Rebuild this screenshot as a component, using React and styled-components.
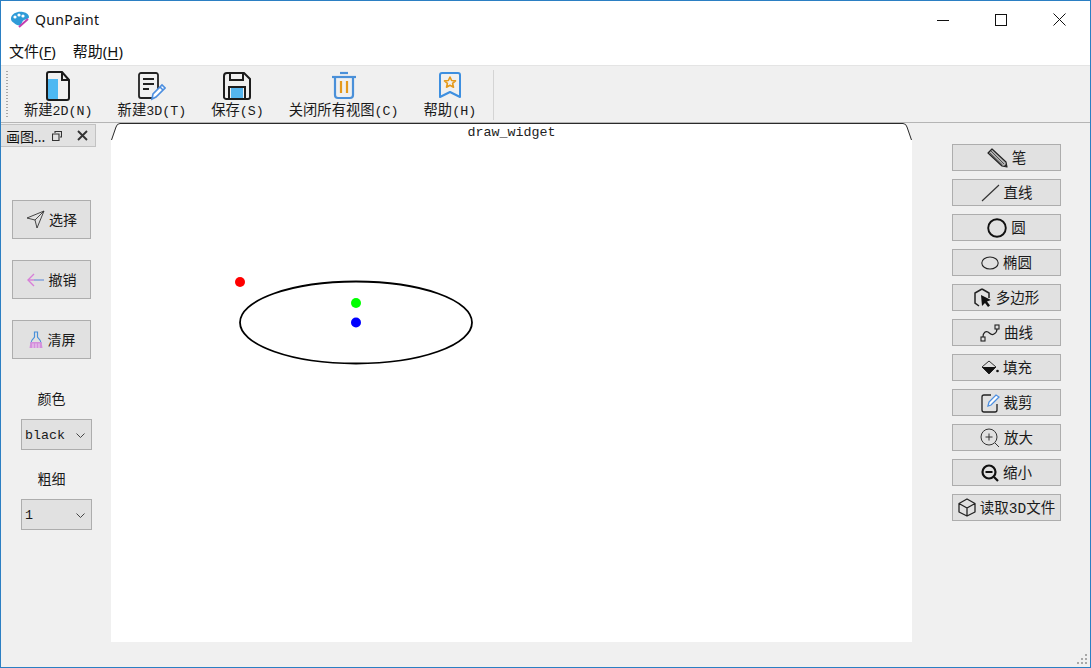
import React from "react";
import styled, { createGlobalStyle } from "styled-components";

const Global = createGlobalStyle`
  html, body { margin: 0; padding: 0; background: #f0f0f0; }
  * { box-sizing: border-box; }
`;
const CJK = `"Liberation Mono", "Noto Sans CJK SC", monospace`;
const UI = `"Noto Sans", "Noto Sans CJK SC", sans-serif`;

const Window = styled.div`
  width: 1091px; height: 668px; border: 1px solid #2b7fc3; background: #f0f0f0;
  display: flex; flex-direction: column; position: relative; overflow: hidden;
  font-family: ${CJK}; color: #1a1a1a;
`;
const TitleBar = styled.div`
  height: 37px; background: #fff; display: flex; align-items: center; padding-left: 9px; flex: none;
`;
const AppName = styled.span`
  font: 14px ${UI}; margin-left: 5px; color: #111; letter-spacing: 0.3px;
`;
const WinControls = styled.div`
  margin-left: auto; display: flex; align-items: center; padding-right: 1px; height: 100%;
`;
const WinBtn = styled.div`
  width: 58.5px; display: flex; justify-content: center; align-items: center;
`;
const MenuBar = styled.div`
  height: 27px; background: #fff; display: flex; gap: 17px; align-items: center; padding: 0 0 3px 8px; flex: none;
  font: 15px ${UI}; color: #111;
`;
const MenuItem = styled.span`
  u { text-underline-offset: 2px; }
`;
const Toolbar = styled.div`
  height: 58px; flex: none; background: #f0f0f0; border-top: 1px solid #e4e4e4; border-bottom: 1px solid #b5b5b5;
  display: flex; align-items: flex-start; padding: 4px 0 0 5px;
`;
const Grip = styled.div`
  width: 2px; height: 48px; margin: 1px 16px 0 0;
  background-image: linear-gradient(#a8a8a8 50%, transparent 50%);
  background-size: 2px 3px;
`;
const ToolButtons = styled.div`
  display: flex; gap: 25px;
`;
const ToolButton = styled.div`
  display: flex; flex-direction: column; align-items: center; font-size: 14.3px; line-height: 16px; white-space: nowrap;
  svg { display: block; height: 32px; margin-bottom: 1px; }
`;
const Latin = styled.span`
  font-size: 13.33px;
`;
const ToolSep = styled.div`
  width: 1px; height: 50px; background: #d4d4d4; margin-left: 17px;
`;
const Main = styled.div`
  flex: 1; display: flex; min-height: 0;
`;
const LeftDock = styled.div`
  width: 110px; flex: none; display: flex; flex-direction: column;
`;
const DockTab = styled.div`
  width: 95px; height: 23px; margin-top: 1px; background: #e2e2e2; border: 1px solid #c2c2c2; border-left: 0;
  display: flex; align-items: center; padding-left: 5px; font: 14px ${UI}; color: #111; white-space: nowrap;
`;
const DockIcons = styled.div`
  margin-left: auto; display: flex; align-items: center; gap: 15px; padding-right: 7px;
`;
const LeftContent = styled.div`
  display: flex; flex-direction: column; padding: 53px 0 0 11px;
`;
const LeftButtons = styled.div`
  display: flex; flex-direction: column; gap: 21px; margin-bottom: 30px;
`;
const LeftButton = styled.div`
  width: 79px; height: 39px; background: #e1e1e1; border: 1px solid #adadad;
  display: flex; align-items: center; justify-content: center; gap: 4px; font-size: 14px;
`;
const ButtonText = styled.span`
  margin-top: -2px;
`;
const FieldLabel = styled.div`
  width: 79px; text-align: center; font-size: 14px; line-height: 20px; padding-top: 1px; height: 20px; margin-bottom: 10px;
`;
const Combo = styled.div`
  width: 71px; height: 31px; margin: 0 0 19px 9px; background: #e1e1e1; border: 1px solid #adadad;
  display: flex; align-items: center; justify-content: space-between; padding: 1px 6px 0 3px; font-size: 13.33px;
`;
const CanvasArea = styled.div`
  width: 801px; flex: none; height: 519px; background: #fff; position: relative;
  display: flex; flex-direction: column; align-items: center;
`;
const TabShape = styled.svg`
  position: absolute; left: 0; top: 0; width: 801px; height: 20px; pointer-events: none;
`;
const TabTitle = styled.div`
  position: relative; font-size: 13.33px; line-height: 16px; margin-top: 2px; color: #222;
`;
const Drawing = styled.svg`
  position: absolute; left: 0; top: 0;
`;
const RightPanel = styled.div`
  flex: 1; display: flex; flex-direction: column; gap: 8px; padding: 21px 0 0 40px;
`;
const ShapeButton = styled.div`
  width: 109px; height: 27px; background: #e1e1e1; border: 1px solid #adadad;
  display: flex; align-items: center; justify-content: center; gap: 4px; font-size: 14.5px; white-space: nowrap;
`;
const SizeGrip = styled.svg`
  position: absolute; right: 2px; bottom: 2px;
`;

const Palette = () => (
  <svg width="20" height="18" viewBox="0 0 20 18">
    <path d="M1 7C2 2 8 0 13 1c4 .8 6 3 6 5 0 2-3 2-5 3-2 1-2 3-3 5-2 1-5 0-7-2C2 11 .6 9 1 7Z" fill="#2f9bd8" />
    <circle cx="5" cy="6" r="1.6" fill="#fff" /><circle cx="9" cy="4" r="1.6" fill="#fff" /><circle cx="13" cy="5" r="1.6" fill="#fff" />
    <path d="M9 16 18 8" stroke="#c43fb0" strokeWidth="2" />
  </svg>
);
const NewDoc = () => (
  <svg width="26" height="32" viewBox="0 0 26 32">
    <path d="M2 9h11v21H4a2 2 0 0 1-2-2Z" fill="#4db8f2" />
    <path d="M4 2h13l7 8v18a2 2 0 0 1-2 2H4a2 2 0 0 1-2-2V4a2 2 0 0 1 2-2Z" fill="none" stroke="#1b1b1b" strokeWidth="2" />
    <path d="M17 2v8h7" fill="none" stroke="#1b1b1b" strokeWidth="2" />
  </svg>
);
const NewNote = () => (
  <svg width="28" height="32" viewBox="0 0 28 32">
    <path d="M20 19V5a2 2 0 0 0-2-2H3a2 2 0 0 0-2 2v21a2 2 0 0 0 2 2h11" fill="none" stroke="#222" strokeWidth="1.8" />
    <path d="M5 9h11M5 14h11M5 19h6" stroke="#222" strokeWidth="1.8" />
    <path d="M14 29l1-5 9-9 3 3-9 9Z" fill="#fff" stroke="#4d8fe0" strokeWidth="1.6" />
    <path d="M22 17l3 3" stroke="#4d8fe0" strokeWidth="1.6" />
  </svg>
);
const Save = () => (
  <svg width="28" height="32" viewBox="0 0 28 32">
    <rect x="8" y="18" width="12" height="11" fill="#55b6ef" />
    <path d="M4 3h17l6 6v18a2 2 0 0 1-2 2H4a2.500 2.500 0 0 1-3-3V6a3 3 0 0 1 3-3Z" fill="none" stroke="#1d1d1d" strokeWidth="2" />
    <path d="M7 3v7h13V3" fill="none" stroke="#1d1d1d" strokeWidth="2" />
    <path d="M6 29V17h16v12" fill="none" stroke="#1d1d1d" strokeWidth="2" />
  </svg>
);
const Trash = () => (
  <svg width="24" height="32" viewBox="0 0 24 32">
    <path d="M8 3h8" stroke="#4a90d9" strokeWidth="2.200" />
    <path d="M0 7h24" stroke="#4a90d9" strokeWidth="2.200" />
    <path d="M3 7v18a3 3 0 0 0 3 3h12a3 3 0 0 0 3-3V7" fill="none" stroke="#4a90d9" strokeWidth="2.200" />
    <path d="M9 11v12M15 11v12" stroke="#e59a1c" strokeWidth="2.200" />
  </svg>
);
const Help = () => (
  <svg width="24" height="32" viewBox="0 0 24 32">
    <path d="M4 3h16a2 2 0 0 1 2 2v22l-10-5-10 5V5a2 2 0 0 1 2-2Z" fill="none" stroke="#3d8fe0" strokeWidth="2" strokeLinejoin="round" />
    <path d="M12 7l1.600 3.500 3.900.4-2.900 2.500.9 3.800-3.500-2-3.500 2 .9-3.800-2.900-2.500 3.900-.4Z" fill="none" stroke="#e59a1c" strokeWidth="1.600" strokeLinejoin="round" />
  </svg>
);

const Send = () => (
  <svg width="19" height="19" viewBox="0 0 19 19">
    <path d="M18 1 1 8l8 2 2 8Z M18 1 9 10" fill="none" stroke="#333" strokeWidth=".9" strokeLinejoin="round" />
  </svg>
);
const BackArrow = () => (
  <svg width="18" height="14" viewBox="0 0 18 14">
    <path d="M7 1 1 7l6 6" fill="none" stroke="#d77fd8" strokeWidth="1.400" />
    <path d="M1 7h6" stroke="#d77fd8" strokeWidth="1.400" />
    <path d="M7 7h10" stroke="#7f9ed8" strokeWidth="1.400" />
  </svg>
);
const Broom = () => (
  <svg width="16" height="18" viewBox="0 0 16 18">
    <path d="M6.500 1h3v5c0 1 3 2 3.500 6H3C3.500 8 6.500 7 6.500 6Z" fill="none" stroke="#4a90d9" strokeWidth="1.200" />
    <path d="M2.500 11h11l1 6H1.500Z" fill="#d48fdc" />
    <path d="M5 12.500V17M8 12.500V17M11 12.500V17" stroke="#f2e4f4" strokeWidth=".8" />
  </svg>
);

const Pencil = () => (
  <svg width="21" height="20" viewBox="0 0 21 20">
    <path d="M1 5l4-4 14 13 1 5-5-1Z" fill="#b5b5b5" stroke="#222" strokeWidth="1.200" strokeLinejoin="round" />
    <path d="M4 3l13 13M2.500 4.500l13 12.500" stroke="#333" strokeWidth=".8" />
    <path d="M17 18l3 1-1-3Z" fill="#222" />
  </svg>
);
const LineIc = () => (
  <svg width="19" height="18" viewBox="0 0 19 18"><path d="M1 17 18 1" stroke="#333" strokeWidth="1.100" /></svg>
);
const CircleIc = () => (
  <svg width="20" height="20" viewBox="0 0 20 20"><circle cx="10" cy="10" r="8.800" fill="none" stroke="#111" strokeWidth="1.900" /></svg>
);
const EllipseIc = () => (
  <svg width="18" height="14" viewBox="0 0 18 14"><ellipse cx="9" cy="7" rx="8.200" ry="6" fill="none" stroke="#222" strokeWidth="1.100" /></svg>
);
const PolyIc = () => (
  <svg width="18" height="20" viewBox="0 0 18 20">
    <path d="M8 1 15 5v5M5 18l-4-3V5l7-4" fill="none" stroke="#222" strokeWidth="1.500" />
    <path d="M7 7l10 5-4 1.500 3 4-2 1.500-3-4-3 3Z" fill="#111" />
  </svg>
);
const CurveIc = () => (
  <svg width="20" height="20" viewBox="0 0 20 20">
    <rect x="1" y="14" width="4" height="4" fill="none" stroke="#222" strokeWidth="1.100" />
    <rect x="15" y="2" width="4" height="4" fill="none" stroke="#222" strokeWidth="1.100" />
    <path d="M3 14c0-5 3-6 5-5s3 4 6 2c2-1 3-3 3-5" fill="none" stroke="#222" strokeWidth="1.200" />
  </svg>
);
const FillIc = () => (
  <svg width="18" height="15" viewBox="0 0 18 15">
    <path d="M8 1 1 7l7 7 7-7Z" fill="none" stroke="#333" strokeWidth="1" />
    <path d="M1 7h14l-7 7Z" fill="#111" />
    <circle cx="16.500" cy="11" r="1.300" fill="#111" />
  </svg>
);
const CropIc = () => (
  <svg width="19" height="20" viewBox="0 0 19 20">
    <path d="M10 2H3a2 2 0 0 0-2 2v13a2 2 0 0 0 2 2h11a2 2 0 0 0 2-2v-6" fill="none" stroke="#222" strokeWidth="1.300" />
    <path d="M7 13l1-4 7-7 3 2-8 8Z" fill="#fff" stroke="#4d8fe0" strokeWidth="1.300" />
  </svg>
);
const ZoomIn = () => (
  <svg width="20" height="20" viewBox="0 0 20 20">
    <circle cx="9" cy="9" r="8" fill="none" stroke="#333" strokeWidth="1" />
    <path d="M5.500 9h7M9 5.500v7M15 15l4 4" stroke="#333" strokeWidth="1" />
  </svg>
);
const ZoomOut = () => (
  <svg width="18" height="18" viewBox="0 0 18 18">
    <circle cx="8" cy="8" r="6.500" fill="none" stroke="#111" strokeWidth="2.200" />
    <path d="M4.500 8h7M13 13l4 4" stroke="#111" strokeWidth="2.200" />
  </svg>
);
const Cube = () => (
  <svg width="18" height="19" viewBox="0 0 18 19">
    <path d="M9 1l8 4.500v8.500L9 18l-8-4V5.500Z M1 5.500 9 10l8-4.500M9 10v8" fill="none" stroke="#222" strokeWidth="1.300" strokeLinejoin="round" />
  </svg>
);
const Chevron = () => (
  <svg width="9" height="5" viewBox="0 0 9 5"><path d="M.5.5 4.500 4.500l4-4" fill="none" stroke="#444" strokeWidth="1" /></svg>
);

const shapes = [
  [Pencil, "笔"], [LineIc, "直线"], [CircleIc, "圆"], [EllipseIc, "椭圆"], [PolyIc, "多边形"],
  [CurveIc, "曲线"], [FillIc, "填充"], [CropIc, "裁剪"], [ZoomIn, "放大"], [ZoomOut, "缩小"], [Cube, "读取3D文件"],
];
const tools = [
  [NewDoc, "新建", "2D(N)"], [NewNote, "新建", "3D(T)"], [Save, "保存", "(S)"],
  [Trash, "关闭所有视图", "(C)"], [Help, "帮助", "(H)"],
];

export default function App() {
  return (
    <Window>
      <Global />
      <TitleBar>
        <Palette />
        <AppName>QunPaint</AppName>
        <WinControls>
          <WinBtn><svg width="12" height="12" viewBox="0 0 12 12"><path d="M0 6.500h12" stroke="#111" /></svg></WinBtn>
          <WinBtn><svg width="12" height="12" viewBox="0 0 12 12"><rect x=".5" y=".5" width="11" height="11" fill="none" stroke="#111" /></svg></WinBtn>
          <WinBtn><svg width="13" height="13" viewBox="0 0 13 13"><path d="M.5.5l12 12M12.500.5l-12 12" stroke="#111" /></svg></WinBtn>
        </WinControls>
      </TitleBar>
      <MenuBar>
        <MenuItem>文件(<u>F</u>)</MenuItem>
        <MenuItem>帮助(<u>H</u>)</MenuItem>
      </MenuBar>
      <Toolbar>
        <Grip />
        <ToolButtons>
          {tools.map(([Ic, cn, lat]) => (
            <ToolButton key={cn + lat}><Ic />
              <span>{cn}<Latin>{lat}</Latin></span>
            </ToolButton>
          ))}
        </ToolButtons>
        <ToolSep />
      </Toolbar>
      <Main>
        <LeftDock>
          <DockTab>画图...
            <DockIcons>
              <svg width="10" height="10" viewBox="0 0 10 10"><path d="M3 2V.5h6.500V6H8M.5 3h6.500v6.500H.5Z" fill="none" stroke="#333" strokeWidth="1.100" /></svg>
              <svg width="11" height="11" viewBox="0 0 11 11"><path d="M1 1l9 9M10 1l-9 9" stroke="#333" strokeWidth="1.900" /></svg>
            </DockIcons>
          </DockTab>
          <LeftContent>
            <LeftButtons>
              <LeftButton><Send /><ButtonText>选择</ButtonText></LeftButton>
              <LeftButton><BackArrow /><ButtonText>撤销</ButtonText></LeftButton>
              <LeftButton><Broom /><ButtonText>清屏</ButtonText></LeftButton>
            </LeftButtons>
            <FieldLabel>颜色</FieldLabel>
            <Combo>black<Chevron /></Combo>
            <FieldLabel>粗细</FieldLabel>
            <Combo>1<Chevron /></Combo>
          </LeftContent>
        </LeftDock>
        <CanvasArea>
          <TabTitle>draw_widget</TabTitle>
          <TabShape viewBox="0 0 801 20">
            <path d="M0 0h7L1 17H0Z M801 0h-7L800 17h1Z" fill="#f0f0f0" />
            <path d="M0.500 17 5 4Q6 .5 9 .5H792Q795 .5 796 4L800.500 17" fill="none" stroke="#2a2a2a" strokeWidth="1" />
          </TabShape>
          <Drawing width="801" height="519" viewBox="0 0 801 519">
            <ellipse cx="245" cy="199.500" rx="116" ry="41" fill="none" stroke="#000" strokeWidth="1.800" />
            <circle cx="129" cy="159" r="5" fill="#f00" />
            <circle cx="245" cy="180" r="5" fill="#0f0" />
            <circle cx="245" cy="199.500" r="5" fill="#00f" />
          </Drawing>
        </CanvasArea>
        <RightPanel>
          {shapes.map(([Ic, label]) => (
            <ShapeButton key={label}><Ic /><ButtonText>{label}</ButtonText></ShapeButton>
          ))}
        </RightPanel>
      </Main>
      <SizeGrip width="12" height="12" viewBox="0 0 12 12">
        <g fill="#a8a8a8">
          <rect x="9" y="1" width="2" height="2" /><rect x="5" y="5" width="2" height="2" /><rect x="9" y="5" width="2" height="2" />
          <rect x="1" y="9" width="2" height="2" /><rect x="5" y="9" width="2" height="2" /><rect x="9" y="9" width="2" height="2" />
        </g>
      </SizeGrip>
    </Window>
  );
}
